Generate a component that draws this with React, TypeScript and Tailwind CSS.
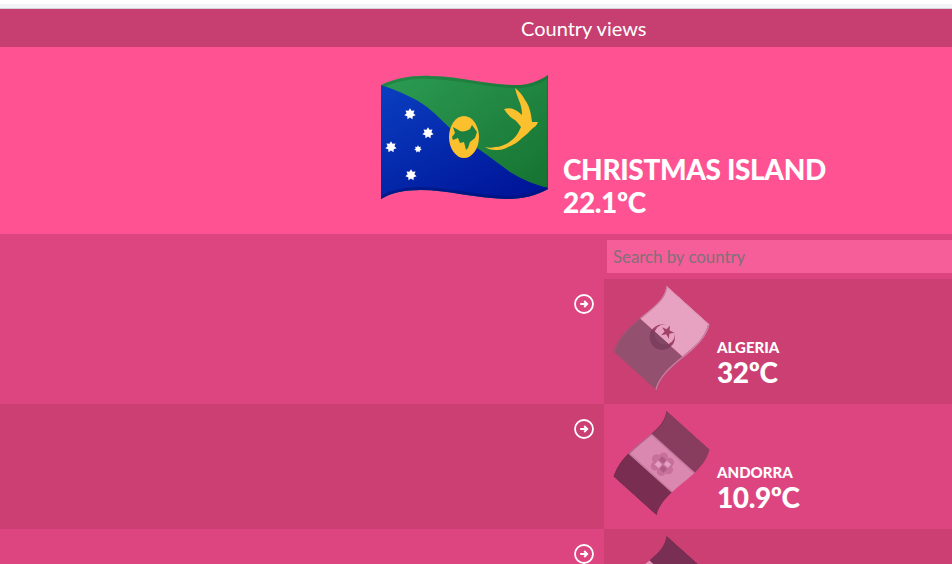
import React from "react";

const WAVE =
  "M0,11 C15,4 33,1 50,2 C85,3 110,12 140,11 C150,10 160,6 167,1 L167,115 C155,122 140,125 125,125 C95,124 65,116 40,116 C22,116 10,119 0,125 Z";

const TOP_EDGE = "M0,11 C15,4 33,1 50,2 C85,3 110,12 140,11 C150,10 160,6 167,1";
const BOTTOM_EDGE = "M167,115 C155,122 140,125 125,125 C95,124 65,116 40,116 C22,116 10,119 0,125";

// 7 point star for the southern cross
function starPoints(cx: number, cy: number, r: number) {
  const pts: string[] = [];
  for (let i = 0; i < 14; i++) {
    const rad = i % 2 === 0 ? r : r * 0.6;
    const a = (Math.PI * i) / 7 - Math.PI / 2;
    pts.push(`${cx + rad * Math.cos(a)},${cy + rad * Math.sin(a)}`);
  }
  return pts.join(" ");
}

const ChristmasFlag = () => (
  <svg viewBox="0 0 167 126" className="w-[167px] h-[126px] shrink-0">
    <defs>
      <clipPath id="cx-wave">
        <path d={WAVE} />
      </clipPath>
      <linearGradient id="cx-blue" x1="0" y1="0" x2="0.7" y2="1">
        <stop offset="0" stopColor="#0a3fc0" />
        <stop offset="1" stopColor="#00169a" />
      </linearGradient>
      <linearGradient id="cx-green" x1="0" y1="0" x2="1" y2="1">
        <stop offset="0" stopColor="#2c9c53" />
        <stop offset="1" stopColor="#157030" />
      </linearGradient>
    </defs>
    <g clipPath="url(#cx-wave)">
      <rect width="167" height="126" fill="url(#cx-green)" />
      <path
        d="M0,11 C18,17 34,24 46,33 C56,41 62,48 69,54 C80,63 90,70 99,76 C110,84 120,91 129,98 C142,106 155,111 167,114 L167,126 L0,126 Z"
        fill="url(#cx-blue)"
      />
      <path d={TOP_EDGE} fill="none" stroke="#0f5c2a" strokeOpacity="0.3" strokeWidth="6" />
      <path d={BOTTOM_EDGE} fill="none" stroke="#000f6b" strokeOpacity="0.45" strokeWidth="6" />
      <path d="M167,1 L167,115" stroke="#0d5a26" strokeOpacity="0.35" strokeWidth="2" />
    </g>
    <polygon points={starPoints(29, 40, 5.8)} fill="#fff" />
    <polygon points={starPoints(47, 59, 5.8)} fill="#fff" />
    <polygon points={starPoints(10, 73, 5.8)} fill="#fff" />
    <polygon points={starPoints(37, 75, 3.8)} fill="#fff" />
    <polygon points={starPoints(30, 101, 5.8)} fill="#fff" />
    <ellipse cx="83" cy="63" rx="15" ry="21" fill="#fbc02d" />
    {/* bird on the disc */}
    <path
      d="M72,53 L79,57 C82,58 86,57 89,55 L91,51 L96,58 L94,64 L89,68 L87,74 L85,76 L83,68 L79,69 L77,64 L72,66 L71,63 L74,59 Z"
      fill="#1b8040"
    />
    {/* golden bosun bird */}
    <path
      d="M134,14 C139,18 142,22 144,26 C148,31 150,38 151,48 L157,48 C156,51 154,53 152,54 C148,58 145,61 141,64 C136,69 132,71 127,73 C122,76 118,76 114,76 C110,76 107,75 104,73 C108,74 111,74 114,73 C119,73 123,71 127,69 C131,66 135,63 137,59 C138,57 139,55 140,53 C138,50 136,48 134,46 C130,44 126,40 123,35 C127,34 130,34 132,35 C135,36 138,38 141,41 C141,36 140,32 139,29 C137,24 135,19 134,14 Z"
      fill="#fbc02d"
    />
  </svg>
);

const AlgeriaFlag = () => (
  <svg viewBox="0 0 167 126" className="w-[85px] h-[64px]">
    <defs>
      <clipPath id="dz-wave">
        <path d={WAVE} />
      </clipPath>
      <clipPath id="dz-hoist">
        <rect width="84" height="126" />
      </clipPath>
    </defs>
    <g clipPath="url(#dz-wave)">
      <rect width="84" height="126" fill="#93506f" />
      <rect x="84" width="83" height="126" fill="#e8a2c1" />
      <path d={TOP_EDGE} fill="none" stroke="#a8587c" strokeOpacity="0.5" strokeWidth="5" />
      <path d={BOTTOM_EDGE} fill="none" stroke="#c77a9f" strokeWidth="6" />
      <path d="M167,1 L167,115" stroke="#d88fb1" strokeWidth="4" />
      <circle cx="86" cy="63" r="25" fill="#a04268" />
      <circle cx="93" cy="63" r="20" fill="#e8a2c1" />
      <g clipPath="url(#dz-hoist)">
        <circle cx="86" cy="63" r="25" fill="#7c3f5d" />
        <circle cx="93" cy="63" r="20" fill="#854766" />
      </g>
      <polygon points="100,50 103,59 113,59 105,65 108,75 100,69 92,75 95,65 87,59 97,59" fill="#a04268" />
    </g>
  </svg>
);

const AndorraFlag = () => (
  <svg viewBox="0 0 167 126" className="w-[85px] h-[64px]">
    <defs>
      <clipPath id="ad-wave">
        <path d={WAVE} />
      </clipPath>
    </defs>
    <g clipPath="url(#ad-wave)">
      <rect width="55" height="126" fill="#792d50" />
      <rect x="55" width="57" height="126" fill="#db88b0" />
      <rect x="112" width="55" height="126" fill="#883d5f" />
      <path d="M55,0 L55,126 M112,0 L112,126" stroke="#c77aa0" strokeWidth="3" />
      <path d={TOP_EDGE} fill="none" stroke="#6e2b49" strokeOpacity="0.4" strokeWidth="4" />
      <circle cx="83" cy="50" r="9" fill="#c8709c" />
      <circle cx="71" cy="58" r="9" fill="#c8709c" />
      <circle cx="95" cy="58" r="9" fill="#c8709c" />
      <circle cx="71" cy="74" r="9" fill="#c8709c" />
      <circle cx="95" cy="74" r="9" fill="#c8709c" />
      <circle cx="83" cy="82" r="9" fill="#c8709c" />
      <rect x="70" y="53" width="26" height="26" fill="#c8709c" />
      <rect x="72" y="55" width="10" height="11" fill="#e3a0c2" />
      <rect x="85" y="55" width="9" height="11" fill="#ad5c86" />
      <rect x="72" y="68" width="10" height="11" fill="#ad5c86" />
      <rect x="85" y="68" width="9" height="11" fill="#e3a0c2" />
    </g>
  </svg>
);

const NextFlag = () => (
  <svg viewBox="0 0 167 126" className="w-[85px] h-[64px]">
    <defs>
      <clipPath id="nx-wave">
        <path d={WAVE} />
      </clipPath>
    </defs>
    <g clipPath="url(#nx-wave)">
      <rect width="167" height="126" fill="#792f53" />
      <rect x="62" y="0" width="46" height="126" fill="#e38fb6" />
    </g>
  </svg>
);

const ArrowCircle = () => (
  <svg viewBox="0 0 20 20" className="w-5 h-5 text-white" fill="none" stroke="currentColor">
    <circle cx="10" cy="10" r="9" strokeWidth="1.8" />
    <path d="M6.2 10 H13 M10.2 7 L13.2 10 L10.2 13" strokeWidth="1.9" />
  </svg>
);

interface Country {
  name?: string;
  temp?: string;
  flag: React.ReactNode;
}

const countries: Country[] = [
  { name: "ALGERIA", temp: "32ºC", flag: <AlgeriaFlag /> },
  { name: "ANDORRA", temp: "10.9ºC", flag: <AndorraFlag /> },
  { flag: <NextFlag /> },
];

export default function App() {
  return (
    <div
      className="h-[564px] overflow-hidden bg-white text-white"
      style={{ fontFamily: "Lato, sans-serif" }}
    >
      <div className="h-1 bg-white" />
      <div className="h-[5px] bg-[#f3f4f6] border-b border-[#d4d4d6]" />

      <header className="h-[38px] bg-[#c63f70] flex items-center pl-[521px] text-[20px] leading-none">
        Country views
      </header>

      <section className="h-[187px] bg-[#ff5292] flex items-start pl-[381px] pt-[27px] gap-[15px]">
        <ChristmasFlag />
        <div className="pt-[79px] font-black text-[28px] leading-[33px] tracking-[-0.36px]">
          <div>CHRISTMAS ISLAND</div>
          <div>22.1ºC</div>
        </div>
      </section>

      <div className="h-[45px] bg-[#dd4581] pl-[607px] pt-[6px]">
        <input
          placeholder="Search by country"
          className="w-full h-[33px] bg-[#f55e98] px-[6px] text-[16.8px] outline-none placeholder:text-[#80717a]"
        />
      </div>

      {countries.map((c, i) => {
        const even = i % 2 === 0;
        return (
          <div key={i} className="grid grid-cols-[604px_1fr] h-[125px]">
            <div className={`flex justify-end pr-[10px] pt-[15px] ${even ? "bg-[#dd4581]" : "bg-[#cb3f72]"}`}>
              <ArrowCircle />
            </div>
            <div className={`flex items-start pl-[9px] pt-[8px] gap-2 ${even ? "bg-[#cb3f72]" : "bg-[#dd4581]"}`}>
              <div className="w-[96px] h-[102px] flex items-center justify-center shrink-0">
                <div className="-rotate-[48deg]">{c.flag}</div>
              </div>
              {c.name && (
                <div className="pt-[52px] font-black">
                  <div className="text-[15px] leading-[17px]">{c.name}</div>
                  <div className="text-[28px] leading-[32px] tracking-[-0.4px]">{c.temp}</div>
                </div>
              )}
            </div>
          </div>
        );
      })}
    </div>
  );
}
